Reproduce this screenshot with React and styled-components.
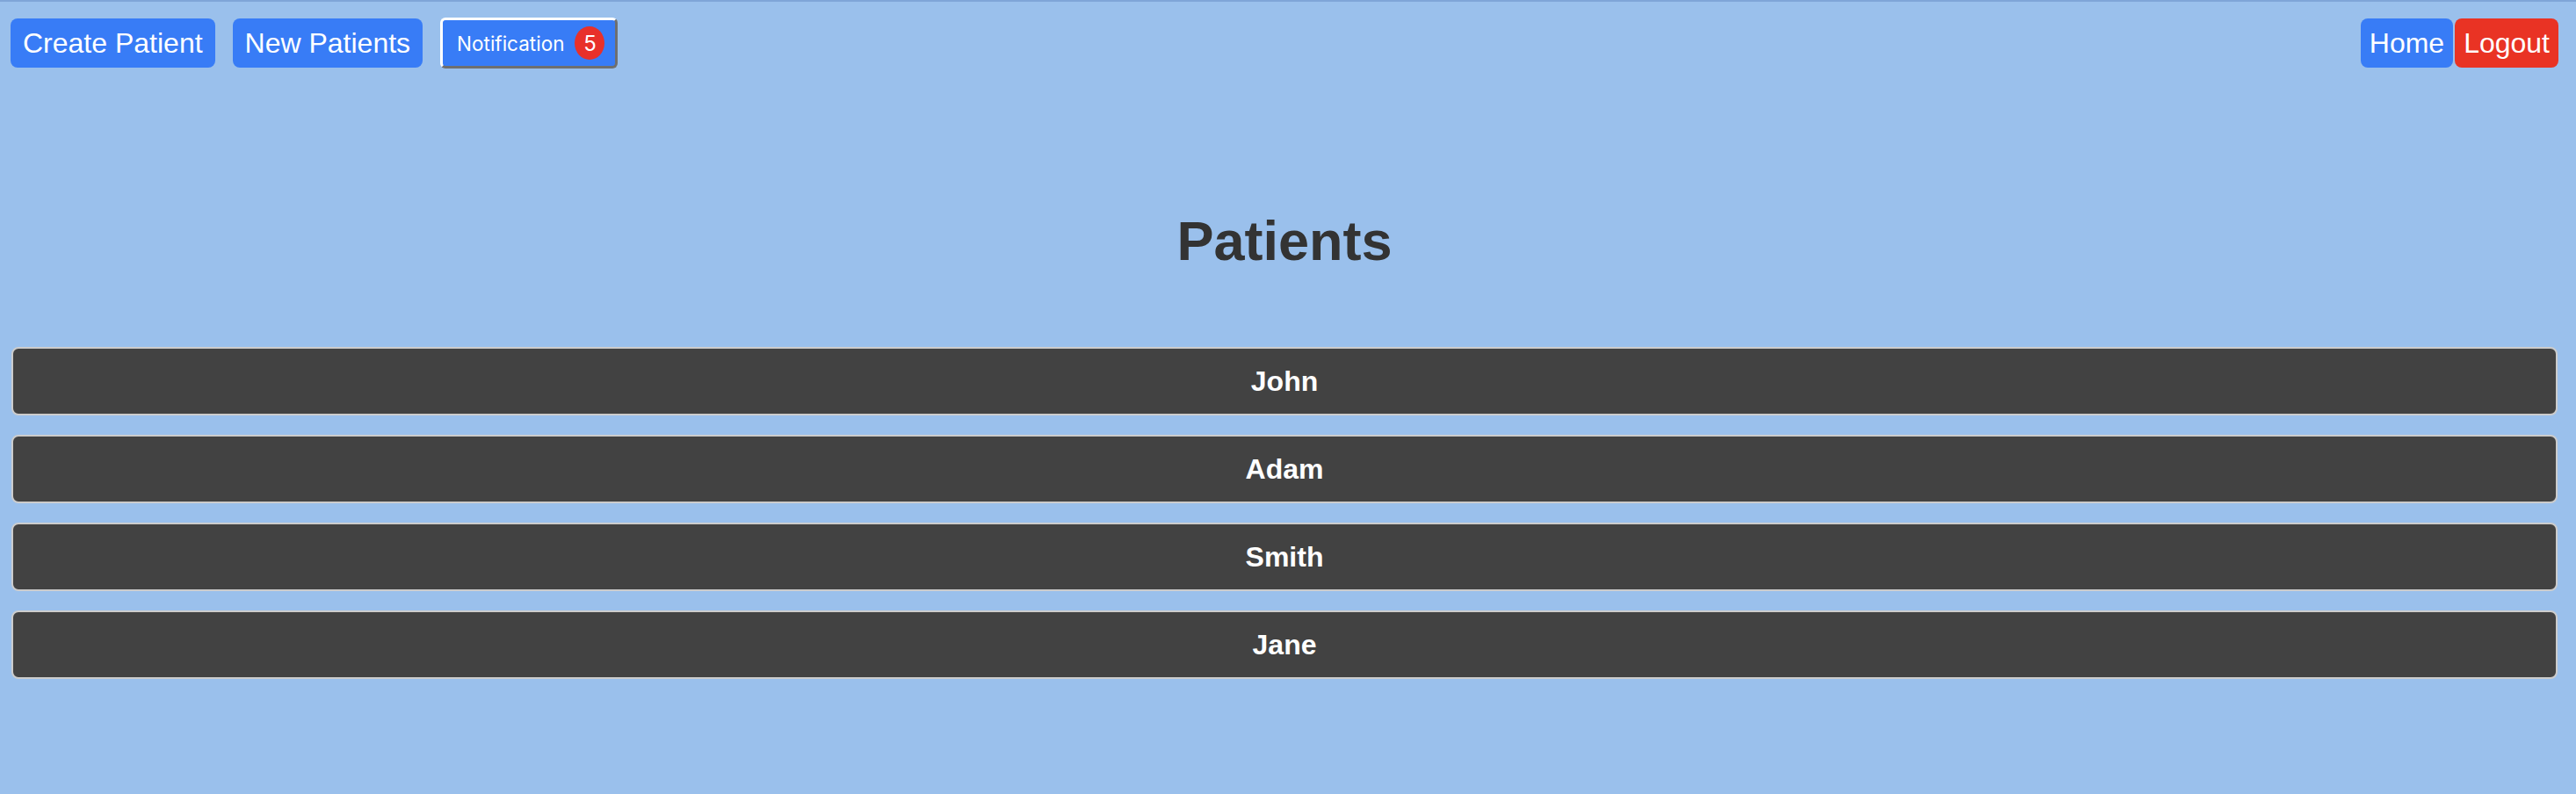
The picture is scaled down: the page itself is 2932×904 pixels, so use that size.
import React from "react";
import styled, { createGlobalStyle } from "styled-components";

const GlobalStyle = createGlobalStyle`
  body {
    margin: 0;
    font-family: "Liberation Sans", Arial, sans-serif;
    background-color: #9ac0ec;
  }
`;

const Page = styled.div`
  min-height: 904px;
  box-sizing: border-box;
  background-color: #9ac0ec;
  border-top: 2px solid #7fa5d8;
`;

const NavBar = styled.nav`
  display: flex;
  justify-content: space-between;
  align-items: center;
  padding: 18px 20px 0 12px;
`;

const NavGroup = styled.div`
  display: flex;
  align-items: center;
  gap: ${(props) => props.gap}px;
`;

const NavButton = styled.button`
  background-color: ${(props) => (props.danger ? "#e93324" : "#387cf6")};
  color: white;
  border: none;
  height: 56px;
  padding: 0 ${(props) => (props.compact ? 10 : 14)}px;
  border-radius: 8px;
  font-family: "Liberation Sans", Arial, sans-serif;
  font-size: 32px;
  line-height: 56px;
  cursor: pointer;
`;

const NotificationButton = styled.button`
  display: flex;
  align-items: center;
  gap: 12px;
  height: 58px;
  box-sizing: border-box;
  padding: 0 12px 0 16px;
  background-color: #387cf6;
  color: white;
  border-style: solid;
  border-width: 3px;
  border-color: #ffffff #6f6f6f #6f6f6f #ffffff;
  border-radius: 6px;
  font-family: Inter, "Liberation Sans", sans-serif;
  font-size: 22.5px;
  cursor: pointer;
`;

const Badge = styled.span`
  display: flex;
  align-items: center;
  justify-content: center;
  width: 34px;
  height: 38px;
  border-radius: 50%;
  background-color: #e8302a;
  color: white;
  font-size: 24px;
`;

const Title = styled.h1`
  margin: 162px 0 86px;
  padding: 0 21px 0 13px;
  text-align: center;
  color: #333333;
  font-size: 63px;
  font-weight: bold;
  line-height: 69px;
`;

const PatientList = styled.div`
  display: flex;
  flex-direction: column;
  gap: 22px;
  padding: 0 21px 0 13px;
`;

const PatientRow = styled.div`
  background-color: #424242;
  border: 2px solid #cccccc;
  border-radius: 8px;
  padding: 18px;
  color: white;
  font-size: 32px;
  font-weight: bold;
  line-height: 38px;
  text-align: center;
`;

const patients = ["John", "Adam", "Smith", "Jane"];

const App = () => {
  return (
    <>
      <GlobalStyle />
      <Page>
        <NavBar>
          <NavGroup gap={20}>
            <NavButton>Create Patient</NavButton>
            <NavButton>New Patients</NavButton>
            <NotificationButton>
              Notification
              <Badge>5</Badge>
            </NotificationButton>
          </NavGroup>
          <NavGroup gap={2}>
            <NavButton compact>Home</NavButton>
            <NavButton compact danger>
              Logout
            </NavButton>
          </NavGroup>
        </NavBar>
        <Title>Patients</Title>
        <PatientList>
          {patients.map((name) => (
            <PatientRow key={name}>{name}</PatientRow>
          ))}
        </PatientList>
      </Page>
    </>
  );
};

export default App;
